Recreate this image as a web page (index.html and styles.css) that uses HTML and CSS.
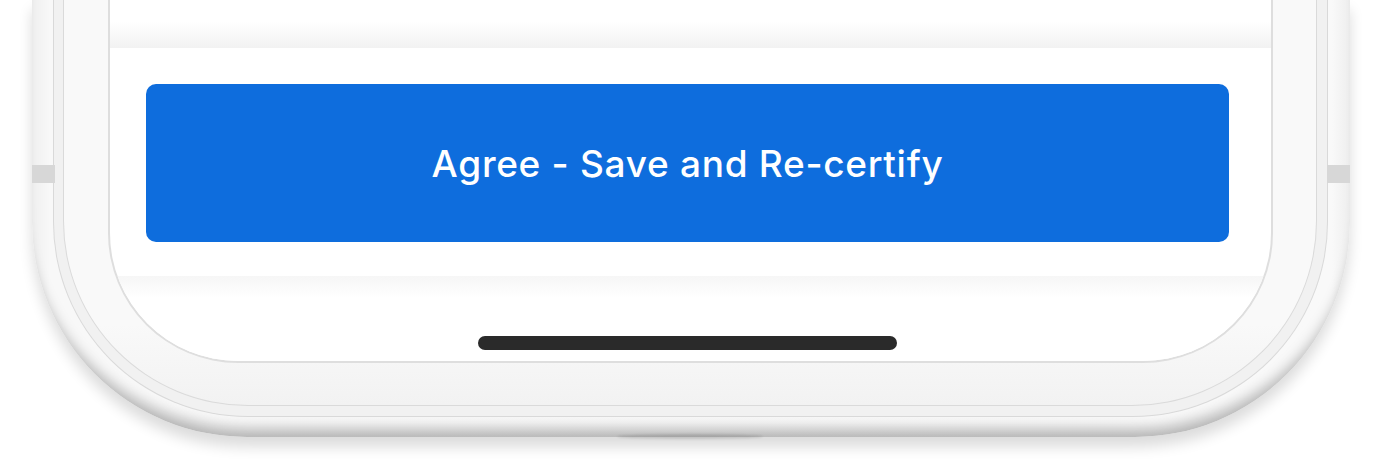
FILE: index.html
```html
<!DOCTYPE html>
<html lang="en">
<head>
    <meta charset="UTF-8">
    <meta name="viewport" content="width=device-width, initial-scale=1.0">
    <title>Re-certify</title>
    <link rel="stylesheet" href="styles.css">
</head>
<body>
    <div class="stage">
        <div class="phone">
            <span class="side-key left"></span>
            <span class="side-key right"></span>
            <span class="port"></span>
            <div class="rim-outer">
                <div class="rim-inner">
                    <div class="screen">
                        <div class="sheet-top"></div>
                        <div class="actions">
                            <button class="button">Agree - Save and Re-certify</button>
                        </div>
                        <div class="home-area">
                            <div class="home-bar"></div>
                        </div>
                    </div>
                </div>
            </div>
        </div>
    </div>
</body>
</html>
```

FILE: styles.css
```css
body {
    margin: 0;
    background: #fff;
    font-family: Inter, "Noto Sans", sans-serif;
    overflow: hidden;
}
.stage {
    height: 461px;
    padding-left: 32px;
}
.phone {
    position: relative;
    width: 1318px;
    height: 437px;
    box-sizing: border-box;
    padding: 0 22px 20px 21px;
    background: linear-gradient(to right, #efefef, #f8f8f8 18px, #f9f9f9 calc(100% - 18px), #eeeeee);
    border-radius: 0 0 215px 215px;
    box-shadow: inset 0 -18px 14px -10px rgba(0, 0, 0, 0.28), 0 10px 14px rgba(0, 0, 0, 0.14);
}
.side-key {
    position: absolute;
    top: 165px;
    width: 23px;
    height: 18px;
    background: #d7d7d7;
}
.side-key.left {
    left: 0;
}
.side-key.right {
    right: 0;
}
.port {
    position: absolute;
    left: 585px;
    bottom: -2px;
    width: 146px;
    height: 5px;
    border-radius: 50%;
    background: rgba(0, 0, 0, 0.12);
    filter: blur(1px);
}
.rim-outer {
    height: 100%;
    box-sizing: border-box;
    padding: 0 10px 10px 9px;
    border: 1px solid #d9d9d9;
    border-top: none;
    border-radius: 0 0 195px 195px;
    background: #f1f1f1;
}
.rim-inner {
    height: 100%;
    box-sizing: border-box;
    padding: 0 43px 42px 44px;
    border: 1px solid #dadada;
    border-top: none;
    border-radius: 0 0 185px 185px;
    background: linear-gradient(to bottom, #f9f9f9 80%, #f2f2f2);
}
.screen {
    height: 100%;
    box-sizing: border-box;
    border: 2px solid #dedede;
    border-top: none;
    border-radius: 0 0 130px 130px;
    background: #fff;
    display: flex;
    flex-direction: column;
    overflow: hidden;
}
.sheet-top {
    height: 48px;
    background: linear-gradient(to bottom, #fff 45%, #f2f2f2);
}
.actions {
    padding: 36px 42px 34px 36px;
}
.button {
    display: block;
    width: 100%;
    height: 158px;
    background: #0e6ddd;
    color: #fff;
    border: none;
    border-radius: 10px;
    font-family: Inter, "Noto Sans", sans-serif;
    font-size: 37px;
    font-weight: 500;
    letter-spacing: 0.7px;
    cursor: pointer;
}
.home-area {
    flex: 1;
    padding: 60px 42px 0 36px;
    background: linear-gradient(to bottom, #f6f6f6, #fff 22px);
}
.home-bar {
    width: 419px;
    height: 14px;
    margin: 0 auto;
    border-radius: 7px;
    background: #2a2a2a;
}
```
